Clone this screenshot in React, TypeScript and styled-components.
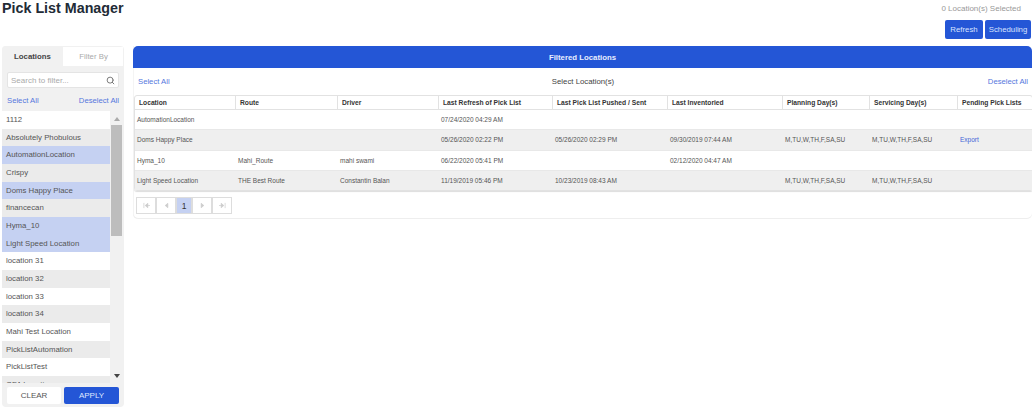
import React from 'react';
import styled, { createGlobalStyle } from 'styled-components';
import { Search } from 'lucide-react';

const locations = [
  { name: '1112' },
  { name: 'Absolutely Phobulous' },
  { name: 'AutomationLocation', selected: true },
  { name: 'Crispy' },
  { name: 'Doms Happy Place', selected: true },
  { name: 'financecan' },
  { name: 'Hyma_10', selected: true },
  { name: 'Light Speed Location', selected: true },
  { name: 'location 31' },
  { name: 'location 32' },
  { name: 'location 33' },
  { name: 'location 34' },
  { name: 'Mahi Test Location' },
  { name: 'PickListAutomation' },
  { name: 'PickListTest' },
  { name: 'QFA Location' },
];

const columns = [
  { title: 'Location', width: 101 },
  { title: 'Route', width: 102 },
  { title: 'Driver', width: 101 },
  { title: 'Last Refresh of Pick List', width: 114 },
  { title: 'Last Pick List Pushed / Sent', width: 115 },
  { title: 'Last Inventoried', width: 115 },
  { title: 'Planning Day(s)', width: 87 },
  { title: 'Servicing Day(s)', width: 88 },
  { title: 'Pending Pick Lists', width: 74 },
];

const days = 'M,TU,W,TH,F,SA,SU';

const rows = [
  ['AutomationLocation', '', '', '07/24/2020 04:29 AM', '', '', '', '', ''],
  ['Doms Happy Place', '', '', '05/26/2020 02:22 PM', '05/26/2020 02:29 PM', '09/30/2019 07:44 AM', days, days, 'Export'],
  ['Hyma_10', 'Mahi_Route', 'mahi swami', '06/22/2020 05:41 PM', '', '02/12/2020 04:47 AM', '', '', ''],
  ['Light Speed Location', 'THE Best Route', 'Constantin Balan', '11/19/2019 05:46 PM', '10/23/2019 08:43 AM', '', days, days, ''],
];

const App: React.FC = () => {
  return (
    <>
      <GlobalStyle />
      <Page>
        <TopBar>
          <Title>Pick List Manager</Title>
          <TopActions>
            <SelectedCount>0 Location(s) Selected</SelectedCount>
            <ButtonRow>
              <TopButton $width={38}>Refresh</TopButton>
              <TopButton $width={46}>Scheduling</TopButton>
            </ButtonRow>
          </TopActions>
        </TopBar>
        <Content>
          <Sidebar>
            <Tabs>
              <Tab $active>Locations</Tab>
              <Tab>Filter By</Tab>
            </Tabs>
            <SearchWrap>
              <SearchBox>
                <SearchPlaceholder>Search to filter...</SearchPlaceholder>
                <Search size={9} strokeWidth={2.6} color="#777" />
              </SearchBox>
            </SearchWrap>
            <SelectLinks>
              <LinkText>Select All</LinkText>
              <LinkText>Deselect All</LinkText>
            </SelectLinks>
            <ListArea>
              <List>
                {locations.map((item, index) => (
                  <ListItem key={item.name} $odd={index % 2 === 1} $selected={item.selected}>
                    {item.name}
                  </ListItem>
                ))}
              </List>
              <ScrollBar>
                <ArrowUp />
                <ScrollThumb />
                <ArrowDown />
              </ScrollBar>
            </ListArea>
            <SideFooter>
              <ClearButton>CLEAR</ClearButton>
              <ApplyButton>APPLY</ApplyButton>
            </SideFooter>
          </Sidebar>
          <Main>
            <PanelHeader>Filtered Locations</PanelHeader>
            <SelectionBar>
              <LinkText>Select All</LinkText>
              <SelectLabel>Select Location(s)</SelectLabel>
              <DeselectLink>Deselect All</DeselectLink>
            </SelectionBar>
            <Grid>
              <colgroup>
                {columns.map((col) => (
                  <col key={col.title} width={col.width} />
                ))}
              </colgroup>
              <thead>
                <tr>
                  {columns.map((col) => (
                    <HeadCell key={col.title}>{col.title}</HeadCell>
                  ))}
                </tr>
              </thead>
              <tbody>
                {rows.map((row, rowIndex) => (
                  <BodyRow key={row[0]} $odd={rowIndex % 2 === 1}>
                    {row.map((value, cellIndex) => (
                      <BodyCell key={cellIndex}>
                        {value === 'Export' ? <ExportLink>{value}</ExportLink> : value}
                      </BodyCell>
                    ))}
                  </BodyRow>
                ))}
              </tbody>
            </Grid>
            <Pager>
              <PageButton>
                <PagerIcon viewBox="0 0 8 8">
                  <path d="M1 1v6M5.500 1.500 2.500 4l3 2.500zM5 4h3" />
                </PagerIcon>
              </PageButton>
              <PageButton>
                <PagerIcon viewBox="0 0 8 8">
                  <path d="M5.500 1.500 2.500 4l3 2.500z" />
                </PagerIcon>
              </PageButton>
              <PageNumber>1</PageNumber>
              <PageButton>
                <PagerIcon viewBox="0 0 8 8">
                  <path d="M2.500 1.500 5.500 4l-3 2.500z" />
                </PagerIcon>
              </PageButton>
              <PageButton>
                <PagerIcon viewBox="0 0 8 8">
                  <path d="M7 1v6M2.500 1.500 5.500 4l-3 2.500zM0 4h3" />
                </PagerIcon>
              </PageButton>
            </Pager>
          </Main>
        </Content>
      </Page>
    </>
  );
};

const GlobalStyle = createGlobalStyle`
  html, body {
    margin: 0;
    padding: 0;
    background: #fff;
    overflow: hidden;
  }
  body {
    font-family: 'Liberation Sans', Arial, sans-serif;
    color: #333;
  }
`;

const Page = styled.div`
  width: 1032px;
  height: 408px;
  overflow: hidden;
`;

const TopBar = styled.div`
  height: 40px;
  display: flex;
  justify-content: space-between;
  align-items: flex-start;
  margin-bottom: 6px;
`;

const Title = styled.h1`
  margin: 0 0 0 2px;
  font-size: 14.300px;
  line-height: 17px;
  font-weight: 700;
  color: #222b36;
`;

const TopActions = styled.div`
  display: flex;
  flex-direction: column;
  align-items: flex-end;
  padding-right: 1px;
`;

const SelectedCount = styled.div`
  font-size: 8px;
  line-height: 17px;
  color: #999;
  margin-right: 10px;
`;

const ButtonRow = styled.div`
  display: flex;
  gap: 2px;
  margin-top: 3px;
`;

const TopButton = styled.button<{ $width: number }>`
  width: ${({ $width }) => $width}px;
  height: 19px;
  padding: 0;
  border: none;
  border-radius: 2px;
  background: #2456d6;
  color: #d9e3ff;
  font-family: inherit;
  font-size: 7.800px;
`;

const Content = styled.div`
  display: flex;
  align-items: flex-start;
  padding-left: 2px;
  gap: 9px;
`;

const Sidebar = styled.aside`
  width: 122px;
  height: 361px;
  flex: none;
  background: #f1f1f1;
  border-radius: 4px;
  display: flex;
  flex-direction: column;
  overflow: hidden;
`;

const Tabs = styled.div`
  display: flex;
  height: 20px;
  flex: none;
`;

const Tab = styled.div<{ $active?: boolean }>`
  flex: 1;
  display: flex;
  align-items: center;
  justify-content: center;
  font-size: 7.800px;
  font-weight: ${({ $active }) => ($active ? 700 : 400)};
  color: ${({ $active }) => ($active ? '#444' : '#aaa')};
  background: ${({ $active }) => ($active ? '#f1f1f1' : '#fff')};
  box-shadow: ${({ $active }) => ($active ? 'none' : 'inset 0 1px 0 #f1f1f1, inset -1px 0 0 #f1f1f1')};
`;

const SearchWrap = styled.div`
  padding: 6px 5px 0;
  flex: none;
`;

const SearchBox = styled.div`
  height: 16px;
  background: #fff;
  border: 1px solid #e4e4e4;
  border-radius: 2px;
  box-sizing: border-box;
  padding: 0 3px;
  display: flex;
  align-items: center;
  justify-content: space-between;
`;

const SearchPlaceholder = styled.span`
  font-size: 8px;
  color: #aaa;
`;

const SelectLinks = styled.div`
  height: 23px;
  flex: none;
  padding: 2px 5px 0;
  box-sizing: border-box;
  display: flex;
  align-items: center;
  justify-content: space-between;
`;

const LinkText = styled.span`
  font-size: 7.700px;
  color: #5577dd;
`;

const DeselectLink = styled(LinkText)`
  justify-self: end;
`;

const ListArea = styled.div`
  flex: 1;
  min-height: 0;
  display: flex;
  overflow: hidden;
`;

const List = styled.div`
  width: 108px;
  flex: none;
`;

const ListItem = styled.div<{ $odd?: boolean; $selected?: boolean }>`
  height: 17.670px;
  line-height: 18.500px;
  padding-left: 4px;
  font-size: 7.800px;
  color: #555;
  background: ${({ $odd, $selected }) =>
    $selected ? '#c5d1f2' : $odd ? '#ebebeb' : '#fff'};
`;

const ScrollBar = styled.div`
  width: 13px;
  flex: none;
  display: flex;
  flex-direction: column;
  align-items: center;
`;

const ScrollThumb = styled.div`
  width: 11px;
  height: 111px;
  background: #bdbdbd;
  margin-top: 4px;
  margin-bottom: auto;
`;

const ArrowUp = styled.div`
  width: 0;
  height: 0;
  margin-top: 6px;
  border-left: 3px solid transparent;
  border-right: 3px solid transparent;
  border-bottom: 4px solid #aaa;
`;

const ArrowDown = styled.div`
  width: 0;
  height: 0;
  margin-bottom: 5px;
  border-left: 3px solid transparent;
  border-right: 3px solid transparent;
  border-top: 4px solid #444;
`;

const SideFooter = styled.div`
  height: 24px;
  flex: none;
  padding: 4px 5px 3px;
  box-sizing: border-box;
  display: flex;
  gap: 3px;
`;

const ClearButton = styled.button`
  width: 54px;
  border: none;
  border-radius: 2px;
  background: #fff;
  color: #555;
  font-family: inherit;
  font-size: 8px;
  padding: 0;
`;

const ApplyButton = styled(ClearButton)`
  width: 55px;
  background: #2456d6;
  color: #dfe7ff;
`;

const Main = styled.main`
  flex: 1;
  min-width: 0;
  height: 173px;
  box-shadow: inset 0 -1px 0 #eee, inset 1px 0 0 #f4f4f4;
  border-radius: 0 0 5px 5px;
`;

const PanelHeader = styled.div`
  height: 22px;
  background: #2456d6;
  border-radius: 5px 5px 0 0;
  color: #e8eeff;
  font-size: 7.800px;
  font-weight: 700;
  display: flex;
  align-items: center;
  justify-content: center;
`;

const SelectionBar = styled.div`
  height: 27px;
  padding: 0 4px 0 5px;
  display: grid;
  grid-template-columns: 1fr auto 1fr;
  align-items: center;
`;

const SelectLabel = styled.span`
  font-size: 7.800px;
  color: #444;
`;

const Grid = styled.table`
  width: 897px;
  margin-left: 1px;
  table-layout: fixed;
  border-collapse: separate;
  border-spacing: 0;
  border-radius: 3px;
  border: 1px solid #e2e2e2;
  box-shadow: 0 1px 1px #ddd;
`;

const HeadCell = styled.th`
  height: 13px;
  padding: 0 0 0 4px;
  text-align: left;
  font-size: 6.700px;
  font-weight: 700;
  color: #333;
  border-right: 1px solid #e2e2e2;
  border-bottom: 1px solid #e2e2e2;
  white-space: nowrap;
  overflow: hidden;
  &:last-child {
    border-right: none;
  }
`;

const BodyRow = styled.tr<{ $odd?: boolean }>`
  background: ${({ $odd }) => ($odd ? '#efefef' : '#fff')};
`;

const BodyCell = styled.td`
  height: 19.300px;
  padding: 0 0 0 2px;
  font-size: 6.500px;
  color: #555;
  border-bottom: 1px solid #e8e8e8;
  white-space: nowrap;
  overflow: hidden;
  tr:last-child & {
    border-bottom: none;
  }
`;

const ExportLink = styled.span`
  color: #3f63d8;
`;

const Pager = styled.div`
  display: flex;
  height: 17px;
  margin: 6px 0 0 3px;
`;

const PageButton = styled.div`
  width: 20px;
  box-sizing: border-box;
  border: 1px solid #ddd;
  display: flex;
  align-items: center;
  justify-content: center;
  background: #fff;
`;

const PageNumber = styled(PageButton)`
  width: 16px;
  background: #c5d1f2;
  font-size: 8.500px;
  color: #333;
`;

const PagerIcon = styled.svg`
  width: 7px;
  height: 7px;
  fill: #ccc;
  stroke: #ccc;
  stroke-width: 0.8;
`;

export default App;
